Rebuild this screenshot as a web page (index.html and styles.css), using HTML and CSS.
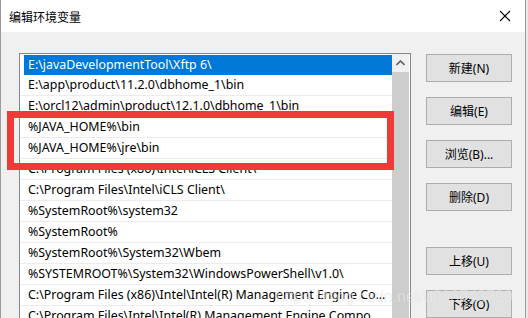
FILE: index.html
```html
<!DOCTYPE html>
<html lang="zh-CN">
<head>
  <meta charset="UTF-8">
  <title>编辑环境变量</title>
  <link rel="stylesheet" href="styles.css">
</head>
<body>
  <div class="window">
    <div class="titlebar">
      <span class="title">编辑环境变量</span>
      <svg class="close" width="12" height="12" viewBox="0 0 12 12">
        <path d="M1 1 L11 11 M11 1 L1 11" stroke="#000" stroke-width="1.1" fill="none"/>
      </svg>
    </div>
    <div class="content">
      <div class="list">
        <div class="rows">
          <div class="row selected">E:\javaDevelopmentTool\Xftp 6\</div>
          <div class="row">E:\app\product\11.2.0\dbhome_1\bin</div>
          <div class="row">E:\orcl12\admin\product\12.1.0\dbhome_1\bin</div>
          <div class="row">%JAVA_HOME%\bin</div>
          <div class="row">%JAVA_HOME%\jre\bin</div>
          <div class="row">C:\Program Files (x86)\Intel\iCLS Client\</div>
          <div class="row">C:\Program Files\Intel\iCLS Client\</div>
          <div class="row">%SystemRoot%\system32</div>
          <div class="row">%SystemRoot%</div>
          <div class="row">%SystemRoot%\System32\Wbem</div>
          <div class="row">%SYSTEMROOT%\System32\WindowsPowerShell\v1.0\</div>
          <div class="row">C:\Program Files (x86)\Intel\Intel(R) Management Engine Components\DAL</div>
          <div class="row">C:\Program Files\Intel\Intel(R) Management Engine Components\DAL</div>
        </div>
        <div class="scrollbar">
          <div class="scroll-up">
            <svg width="9" height="6" viewBox="0 0 9 6">
              <path d="M0.5 5 L4.5 1 L8.5 5" stroke="#606060" stroke-width="1.6" fill="none"/>
            </svg>
          </div>
          <div class="thumb"></div>
        </div>
      </div>
      <div class="buttons">
        <button>新建(N)</button>
        <button>编辑(E)</button>
        <button>浏览(B)...</button>
        <button>删除(D)</button>
        <button class="gap-before">上移(U)</button>
        <button>下移(O)</button>
      </div>
    </div>
  </div>

  <div class="highlight"></div>
  <div class="watermark">https://blog.csdn.net/u013743790</div>
</body>
</html>
```

FILE: styles.css
```css
* { margin: 0; padding: 0; box-sizing: border-box; }
body { width: 528px; height: 318px; overflow: hidden; background: #e9e9e9; font-family: 'Noto Sans', 'Noto Sans CJK SC', sans-serif; font-size: 12px; color: #000; position: relative; }

.window { width: 526px; height: 318px; border-left: 1px solid #9c9c9c; border-right: 1px solid #9c9c9c; background: #f0f0f0; display: flex; flex-direction: column; }
.titlebar { height: 32px; background: #fff; display: flex; align-items: center; justify-content: space-between; padding: 0 14px 0 8px; }
.title { font-family: 'Noto Sans CJK SC', sans-serif; font-size: 12px; }
.close { display: block; }

.content { flex: 1; display: flex; padding: 21px 0 0 18px; gap: 15px; overflow: hidden; }

.list { width: 392px; border: 1px solid #828790; border-bottom: none; background: #fff; display: flex; }
.rows { width: 372px; display: flex; flex-direction: column; }
.row { height: 21px; line-height: 20px; padding: 0 6px 0 8px; border-bottom: 1px solid #ececec; font-size: 12.4px; white-space: nowrap; overflow: hidden; text-overflow: ellipsis; flex-shrink: 0; }
.row.selected { background: #0078d7; color: #fff; margin: 1px 0 0 4px; height: 20px; padding-left: 4px; border-bottom: none; }

.scrollbar { width: 17px; margin-right: 1px; display: flex; flex-direction: column; background: #f0f0f0; }
.scroll-up { height: 18px; display: flex; align-items: center; justify-content: center; }
.thumb { flex: 1; background: #cdcdcd; }

.buttons { display: flex; flex-direction: column; gap: 15px; padding-top: 1px; }
.buttons button { width: 86px; height: 28px; background: #e1e1e1; border: 1px solid #adadad; font-family: 'Noto Sans', 'Noto Sans CJK SC', sans-serif; font-size: 12px; color: #000; }
.buttons .gap-before { margin-top: 21px; }

.highlight { position: absolute; left: 7px; top: 111px; width: 387px; height: 59px; border: 7px solid #f03a3a; }
.watermark { position: absolute; left: 276px; top: 288px; font-family: 'Liberation Sans', sans-serif; font-size: 16px; color: rgba(255, 255, 255, 0.5); text-shadow: 0 0 1px rgba(120, 120, 120, 0.2); white-space: nowrap; }
```
